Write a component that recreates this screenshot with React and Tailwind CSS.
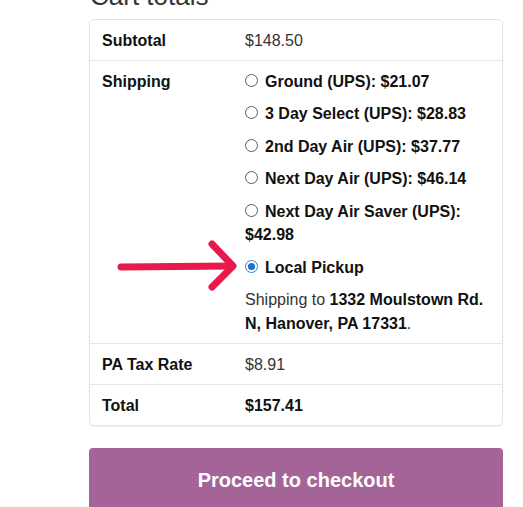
const shippingOptions = [
  { id: "ground", label: "Ground (UPS): $21.07" },
  { id: "3day", label: "3 Day Select (UPS): $28.83" },
  { id: "2day", label: "2nd Day Air (UPS): $37.77" },
  { id: "nextday", label: "Next Day Air (UPS): $46.14" },
  { id: "saver", label: "Next Day Air Saver (UPS): $42.98" },
  { id: "pickup", label: "Local Pickup", checked: true },
];

function Radio({ checked }) {
  return (
    <svg width="13" height="13" viewBox="0 0 13 13" className="absolute left-0 top-[4px]">
      {checked ? (
        <>
          <circle cx="6.5" cy="6.5" r="6" fill="#fff" stroke="#2f7fd8" strokeWidth="1" />
          <circle cx="6.5" cy="6.5" r="3.6" fill="#1f72d0" />
        </>
      ) : (
        <circle cx="6.5" cy="6.5" r="6" fill="#fff" stroke="#5c5c5c" strokeWidth="1" />
      )}
    </svg>
  );
}

function Row({ label, children, last }) {
  return (
    <div className={`grid grid-cols-[143px_1fr] ${last ? "" : "border-b border-[#e8e8e8]"}`}>
      <div className="px-3 pt-[8.5px] pb-[8px] font-bold text-[#111]">{label}</div>
      <div className="px-3 pt-[8.5px] pb-[8px]">{children}</div>
    </div>
  );
}

export default function App() {
  return (
    <div className="min-h-[507px] bg-white pl-[89px] pr-[20px] text-[16px] leading-[23.5px] text-[#333] overflow-hidden" style={{ fontFamily: '"Liberation Sans", Arial, sans-serif' }}>
      <h2 className="-mt-[17px] ml-[1px] text-[26px] leading-[26px] font-normal text-[#333]">Cart totals</h2>

      <div className="relative mt-[10px] w-[414px] rounded-[5px] border border-[#e3e3e3] shadow-[0_1px_2px_rgba(0,0,0,0.06)]">
        <Row label="Subtotal">$148.50</Row>

        <Row label="Shipping">
          <ul>
            {shippingOptions.map((opt) => (
              <li key={opt.id} className="relative mb-[9px] pl-[20px] font-bold text-[#111]">
                <Radio checked={opt.checked} />
                {opt.id === "saver" ? (
                  <>
                    Next Day Air Saver (UPS):
                    <br />
                    <span className="-ml-[20px]">$42.98</span>
                  </>
                ) : (
                  opt.label
                )}
              </li>
            ))}
          </ul>
          <p>
            Shipping to <strong className="text-[#111]">1332 Moulstown Rd. N, Hanover, PA 17331</strong>.
          </p>
        </Row>

        <Row label="PA Tax Rate">$8.91</Row>

        <Row label="Total" last>
          <strong className="text-[#111]">$157.41</strong>
        </Row>

        <svg width="130" height="60" viewBox="0 0 130 60" className="absolute left-[26px] top-[217px]">
          <g stroke="#e8194b" strokeWidth="7" strokeLinecap="round" strokeLinejoin="round" fill="none">
            <line x1="5" y1="30" x2="116" y2="29" />
            <polyline points="96,7 117,29 96,50" />
          </g>
        </svg>
      </div>

      <button className="mt-[22px] w-[414px] rounded-t-[4px] bg-[#a46497] pt-[19px] pb-[21px] text-[20px] leading-[26px] font-bold text-white">
        Proceed to checkout
      </button>
    </div>
  );
}
